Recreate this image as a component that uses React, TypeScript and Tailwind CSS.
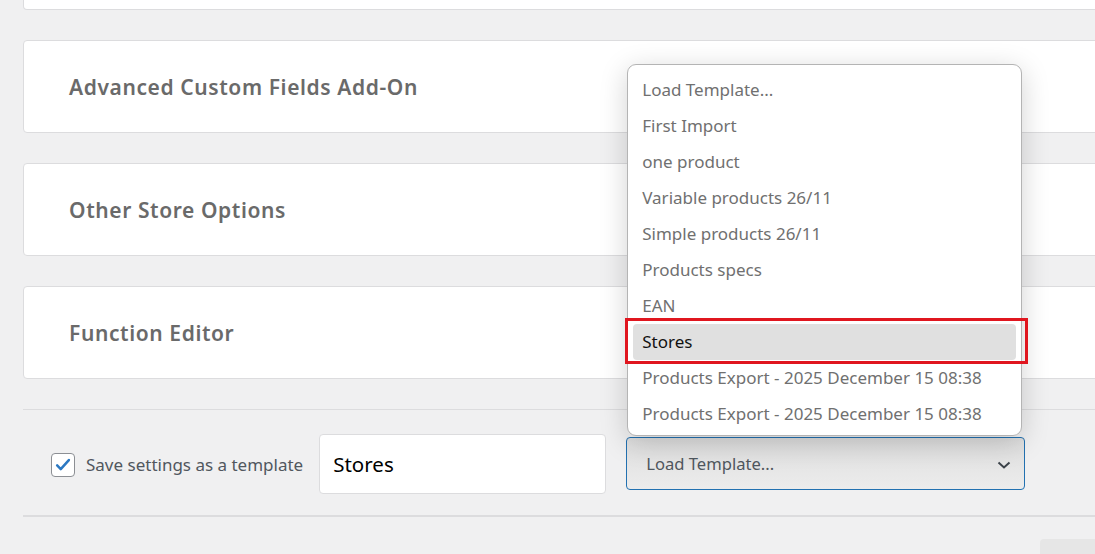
const templates = [
  "Load Template...",
  "First Import",
  "one product",
  "Variable products 26/11",
  "Simple products 26/11",
  "Products specs",
  "EAN",
  "Stores",
  "Products Export - 2025 December 15 08:38",
  "Products Export - 2025 December 15 08:38",
];

const sections = ["Advanced Custom Fields Add-On", "Other Store Options", "Function Editor"];

function SectionCard({ title }: { title: string }) {
  return (
    <div className="h-[93px] flex items-center rounded-[4px] border border-[#dcdcde] bg-white pl-[45px]">
      <h3 className="mt-[3px] text-[21px] font-semibold text-[#6a6a6a] tracking-[0.6px]">{title}</h3>
    </div>
  );
}

function TemplateMenu() {
  return (
    <div className="absolute left-[1px] bottom-[calc(100%+1px)] w-[395px] rounded-[9px] border-[1.5px] border-[#b4b4b4] bg-white pt-[7px] pb-[3px] shadow-[0_6px_28px_rgba(0,0,0,0.18)]">
      {templates.map((t, i) => {
        const active = t === "Stores";
        return (
          <div key={i} className="relative h-[36px] px-[5px]">
            {active && (
              <div className="absolute -left-[3px] -right-[7px] -top-[6px] -bottom-[4px] border-[3px] border-[#e0161f]" />
            )}
            <div
              className={
                active
                  ? "h-full flex items-center rounded-[4px] bg-[#e0e0e0] pl-[9px] text-[17px] text-[#111]"
                  : "h-full flex items-center pl-[9px] text-[17px] text-[#707070]"
              }
            >
              {t}
            </div>
          </div>
        );
      })}
    </div>
  );
}

export default function App() {
  return (
    <div className="h-[554px] w-[1095px] overflow-hidden bg-[#f0f0f1] font-['Noto_Sans','Open_Sans',sans-serif]">
      <div className="ml-[23px] w-[1100px]">
        <div className="h-[10px] rounded-b-[4px] border-x border-b border-[#dcdcde] bg-white" />
        <div className="mt-[30px] flex flex-col gap-[30px]">
          {sections.map((s) => (
            <SectionCard key={s} title={s} />
          ))}
        </div>

        <div className="mt-[30px] h-[108px] border-y border-t-[#dcdcde] border-b-2 border-b-[#dcdcde] flex items-center pl-[28px] pt-[2px]">
          <label className="flex items-center gap-[11px] mt-[3px]">
            <span className="flex h-[24px] w-[24px] items-center justify-center rounded-[4px] border border-[#8c8f94] bg-white">
              <svg width="18" height="18" viewBox="0 0 20 20">
                <path d="M3.5 10.5l4 4 9-10" fill="none" stroke="#2b78c2" strokeWidth="2.8" strokeLinecap="round" strokeLinejoin="round" />
              </svg>
            </span>
            <span className="text-[17px] text-[#50575e]">Save settings as a template</span>
          </label>

          <div className="ml-[16px] flex h-[60px] w-[287px] items-center rounded-[4px] border border-[#dcdcde] bg-white pl-[13px] pt-[2px] text-[20.5px] text-black">
            Stores
          </div>

          <div className="relative ml-[20px]">
            <div className="flex h-[53px] w-[399px] items-center justify-between rounded-[4px] border border-[#2271b1] bg-[linear-gradient(180deg,#dedede,#ececec)] pl-[19px] pr-[13px] pt-[2px]">
              <span className="text-[16.6px] text-[#50575e]">Load Template...</span>
              <svg width="14" height="10" viewBox="0 0 14 10">
                <path d="M1.5 2.5l5.5 5 5.5-5" fill="none" stroke="#3c434a" strokeWidth="2" />
              </svg>
            </div>
            <TemplateMenu />
          </div>
        </div>

        <div className="mt-[22px] ml-[1017px] h-[30px] w-[80px] rounded-[4px] bg-[#e6e6e6]" />
      </div>
    </div>
  );
}
